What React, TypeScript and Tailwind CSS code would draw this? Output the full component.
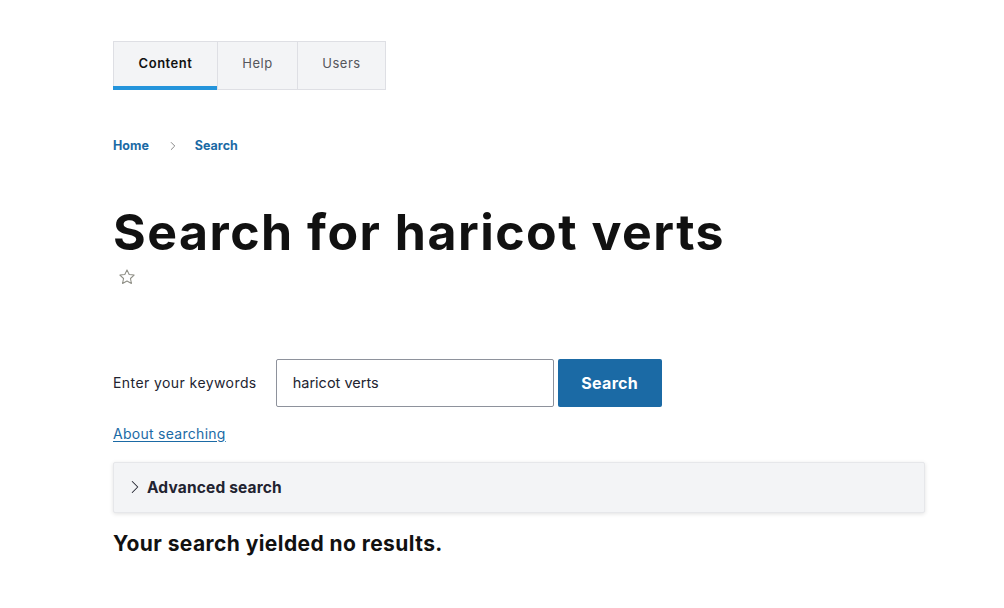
import React from "react";
import { ChevronRight } from "lucide-react";

const font = { fontFamily: "Inter, 'Noto Sans', sans-serif" };

export default function App() {
  const tabs = [
    { name: "Content", active: true, w: "w-[103px]" },
    { name: "Help", active: false, w: "w-[80px]" },
    { name: "Users", active: false, w: "w-[88px]" },
  ];

  return (
    <div className="min-h-[608px] w-[1004px] bg-white text-[#222330]" style={font}>
      <div className="pl-[113px] pr-[79px]">
        {/* Tabs */}
        <div className="pt-[41px]">
          <div className="flex w-fit border border-[#dedfe4] bg-[#f3f4f6]">
            {tabs.map((t, i) => (
              <div
                key={t.name}
                className={`relative flex h-[47px] items-center justify-center pb-[3px] text-[13px] tracking-[0.04em] ${t.w} ${
                  i > 0 ? "border-l border-[#dedfe4]" : ""
                } ${t.active ? "font-semibold text-[#111]" : "text-[#55565b]"}`}
              >
                {t.name}
                {t.active && <span className="absolute -bottom-px -left-px right-0 h-[4px] bg-[#2494db]" />}
              </div>
            ))}
          </div>
        </div>

        {/* Breadcrumb */}
        <div className="mt-[47px] flex items-center text-[12.5px] font-bold text-[#1b6aa5]">
          <span>Home</span>
          <ChevronRight size={14} strokeWidth={1.5} className="ml-[17px] mr-[15px] text-[#777]" />
          <span>Search</span>
        </div>

        {/* Heading */}
        <h1 className="mt-[46px] text-[50px] font-bold leading-[60px] tracking-[0.03em] text-[#111]">
          Search for haricot verts
        </h1>
        <div className="mt-[6px] pl-[5px]">
          <svg width="18" height="18" viewBox="0 0 24 24" fill="none" stroke="#8e8e85" strokeWidth="1.4" strokeLinejoin="round">
            <path d="M12 2.5l2.9 6.1 6.6.8-4.9 4.6 1.3 6.6L12 17.3l-5.9 3.3 1.3-6.6-4.9-4.6 6.6-.8z" />
          </svg>
        </div>

        {/* Search form */}
        <div className="mt-[73px] flex items-center">
          <label className="mr-[19px] text-[14px] tracking-[0.03em] text-[#222330]">Enter your keywords</label>
          <div className="flex h-[48px] w-[278px] items-center rounded-[2px] border border-[#8e929c] px-[16px] text-[14.5px] text-[#222330]">
            haricot verts
          </div>
          <button className="ml-[4px] h-[48px] w-[104px] rounded-[2px] bg-[#1b6aa5] text-[16px] font-bold tracking-[0.02em] text-white">
            Search
          </button>
        </div>
        <div className="mt-[14px]">
          <a className="text-[14px] tracking-[0.02em] text-[#1b6aa5] underline underline-offset-2">About searching</a>
        </div>

        {/* Advanced search */}
        <div className="mt-[17px] flex h-[51px] items-center rounded-[2px] border border-[#e6e7ea] bg-[#f3f4f6] pl-[10px] shadow-[0_1px_4px_rgba(0,0,0,0.12)]">
          <ChevronRight size={22} strokeWidth={1.1} className="text-[#222330]" />
          <span className="ml-[1px] text-[15.5px] font-bold tracking-[0.01em] text-[#222330]">Advanced search</span>
        </div>

        {/* Results */}
        <h2 className="mt-[15px] text-[21px] font-bold tracking-[0.02em] text-[#111]">Your search yielded no results.</h2>
      </div>
    </div>
  );
}
